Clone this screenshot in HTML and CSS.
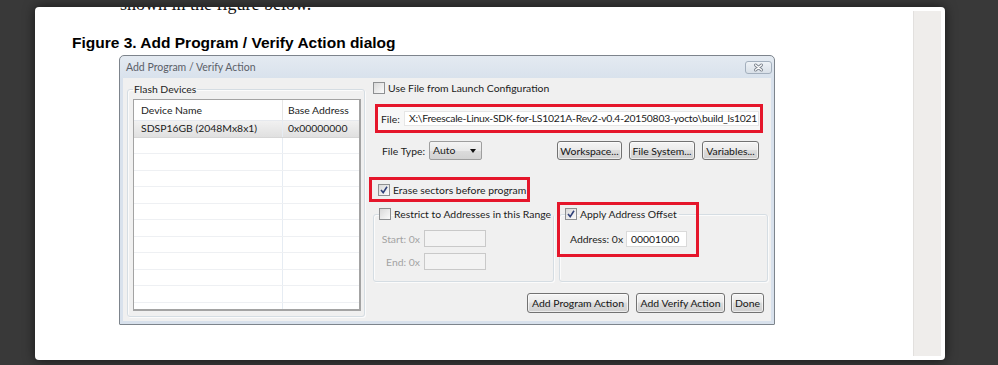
FILE: index.html
```html
<!DOCTYPE html>
<html lang="en">
<head>
  <meta charset="UTF-8">
  <title>Add Program / Verify Action dialog</title>
  <link rel="stylesheet" href="styles.css">
</head>
<body>
  <div class="page">
    <div class="doc">
      <p class="lead">shown in the figure below.</p>
      <h3 class="fig-title">Figure 3. Add Program / Verify Action dialog</h3>

      <!-- Captura del dialogo -->
      <div class="dialog">
        <div class="titlebar">
          <span>Add Program / Verify Action</span>
          <span class="close">
            <svg width="27" height="13" viewBox="0 0 27 13">
              <path d="M10.5 4 L16.5 9 M16.5 4 L10.5 9" stroke="#7a828c" stroke-width="3" stroke-linecap="round"/>
              <path d="M10.5 4 L16.5 9 M16.5 4 L10.5 9" stroke="#fdfdfd" stroke-width="1.3" stroke-linecap="round"/>
            </svg>
          </span>
        </div>

        <div class="dlg-body">
          <fieldset class="group devices">
            <legend>Flash Devices</legend>
            <div class="table">
              <div class="tr th"><div class="c1">Device Name</div><div class="c2">Base Address</div></div>
              <div class="tr sel"><div class="c1">SDSP16GB (2048Mx8x1)</div><div class="c2">0x00000000</div></div>
              <div class="tr"><div class="c1"></div><div class="c2"></div></div>
              <div class="tr"><div class="c1"></div><div class="c2"></div></div>
              <div class="tr"><div class="c1"></div><div class="c2"></div></div>
              <div class="tr"><div class="c1"></div><div class="c2"></div></div>
              <div class="tr"><div class="c1"></div><div class="c2"></div></div>
              <div class="tr"><div class="c1"></div><div class="c2"></div></div>
              <div class="tr"><div class="c1"></div><div class="c2"></div></div>
              <div class="tr"><div class="c1"></div><div class="c2"></div></div>
              <div class="tr"><div class="c1"></div><div class="c2"></div></div>
              <div class="tr"><div class="c1"></div><div class="c2"></div></div>
              <div class="tr"><div class="c1"></div><div class="c2"></div></div>
            </div>
          </fieldset>

          <div class="right">
            <div class="check-row"><span class="cb"></span>Use File from Launch Configuration</div>

            <div class="hl file-box">
              <span class="file-lbl">File:</span>
              <div class="input path">X:\Freescale-Linux-SDK-for-LS1021A-Rev2-v0.4-20150803-yocto\build_ls1021</div>
            </div>

            <div class="type-row">
              <span class="type-lbl">File Type:</span>
              <div class="combo">Auto<i class="arrow"></i></div>
              <div class="spacer"></div>
              <button class="btn w-ws">Workspace...</button>
              <button class="btn w-fs">File System...</button>
              <button class="btn w-var">Variables...</button>
            </div>

            <div class="hl erase">
              <span class="cb on"><svg width="10" height="10" viewBox="0 0 10 10"><path d="M2 5 L4.2 7.6 L8 1.8" fill="none" stroke="#31427a" stroke-width="1.6"/></svg></span>
              Erase sectors before program
            </div>

            <div class="groups">
              <fieldset class="group range">
                <legend><span class="cb"></span>Restrict to Addresses in this Range</legend>
                <div class="range-row"><span class="lbl">Start: 0x</span><div class="input off"></div></div>
                <div class="range-row"><span class="lbl">End: 0x</span><div class="input off"></div></div>
              </fieldset>
              <fieldset class="group offset">
                <legend><span class="cb on"><svg width="10" height="10" viewBox="0 0 10 10"><path d="M2 5 L4.2 7.6 L8 1.8" fill="none" stroke="#31427a" stroke-width="1.6"/></svg></span>Apply Address Offset</legend>
                <div class="addr-row"><span class="addr-lbl">Address: 0x</span><div class="input addr">00001000</div></div>
              </fieldset>
              <!-- Recuadro rojo encima -->
              <div class="mark"></div>
            </div>

            <div class="actions">
              <button class="btn w-prog">Add Program Action</button>
              <button class="btn w-ver">Add Verify Action</button>
              <button class="btn w-done">Done</button>
            </div>
          </div>
        </div>
      </div>
    </div>
    <div class="scrollbar"></div>
  </div>
</body>
</html>
```

FILE: styles.css
```css
/* Fondo y pagina */
body {
  margin: 0;
  height: 365px;
  overflow: hidden;
  background: #393939;
}

.page {
  margin: 7px 0 0 35px;
  width: 910px;
  height: 353px;
  background: #ffffff;
  border-radius: 4px;
  display: flex;
  overflow: hidden;
  box-shadow: 0 0 12px rgba(0, 0, 0, 0.6);
}

.doc {
  flex: 1;
  padding-left: 37px;
  overflow: hidden;
}

.scrollbar {
  width: 28px;
  margin: 4px 4px 4px 0;
  box-sizing: border-box;
  background: #efedeb;
  border-left: 1px solid #e2e0de;
}

.lead {
  margin: -12px 0 0 48px;
  font: 18px/18px "Liberation Serif", serif;
  color: #111;
  white-space: nowrap;
}

.fig-title {
  margin: 22px 0 0;
  font: bold 15.5px/16px "Liberation Sans", Arial, sans-serif;
  color: #000;
}

/* Dialogo */
.dialog {
  width: 656px;
  height: 270px;
  box-sizing: border-box;
  margin: 4px 0 0 47px;
  border: 1px solid #7d848c;
  border-radius: 5px 5px 1px 1px;
  background: linear-gradient(#e4eaf1, #d8e1ec 24px);
  display: flex;
  flex-direction: column;
  font-family: Lato, "Open Sans", sans-serif;
  font-size: 10.4px;
  color: #1b1b1b;
}

.titlebar {
  height: 22px;
  display: flex;
  align-items: center;
  justify-content: space-between;
  padding: 0 2px 0 6px;
  color: #5b6068;
  font-size: 10.5px;
}

.close {
  width: 27px;
  height: 13px;
  box-sizing: border-box;
  border: 1px solid #a3afbd;
  border-radius: 3px;
  background: linear-gradient(#eef2f6, #d9e0e8);
  display: flex;
}

.close svg {
  margin: -1px;
}

.dlg-body {
  flex: 1;
  margin: 0 3px 3px;
  padding: 0 3px 0 4px;
  background: #f0f0f0;
  display: flex;
}

/* Grupos */
.group {
  margin: 0;
  box-sizing: border-box;
  border: 1px solid #d5dde3;
  border-radius: 3px;
  box-shadow: inset 1px 1px 0 #fbfbfb, 1px 1px 0 #fbfbfb;
  min-width: 0;
}

.group legend {
  padding: 0 2px 0 0;
  line-height: 14px;
  display: flex;
  align-items: center;
  gap: 3px;
  white-space: nowrap;
}

.devices {
  width: 238px;
  margin: 4px 0;
  padding: 3px 3px 5px 5px;
}

.devices legend {
  padding: 0 1px;
  color: #222;
}

/* Tabla de dispositivos */
.table {
  height: 212px;
  box-sizing: border-box;
  border: 1px solid #a3a3a3;
  border-right-width: 2px;
  border-bottom-width: 2px;
  background: #fff;
  overflow: hidden;
}

.tr {
  display: flex;
  height: 16.5px;
  box-sizing: border-box;
  border-bottom: 1px solid #eef0f3;
  line-height: 15px;
  white-space: nowrap;
}

.tr.th {
  height: 21px;
  line-height: 20px;
  border-bottom-color: #e6e9ee;
}

.tr.sel {
  background: linear-gradient(#f1f1f1, #e0e0e0);
  border-bottom-color: #d6d6d6;
}

.c1 {
  width: 149px;
  flex: none;
  padding-left: 7px;
  box-sizing: border-box;
  border-right: 1px solid #e6ecf3;
}

.c2 {
  flex: 1;
  padding-left: 5px;
}

.th .c1, .th .c2 {
  border-right-color: #e6e6e6;
}

/* Columna derecha */
.right {
  width: 399px;
  margin-left: 4px;
  display: flex;
  flex-direction: column;
  white-space: nowrap;
}

.cb {
  width: 12px;
  height: 12px;
  box-sizing: border-box;
  flex: none;
  border: 1px solid #8e9092;
  background: linear-gradient(135deg, #d9d9d9, #fbfbfb);
  display: inline-flex;
  align-items: center;
  justify-content: center;
}

.check-row {
  height: 20px;
  padding-left: 4px;
  display: flex;
  align-items: center;
  gap: 3px;
}

.hl {
  box-sizing: border-box;
  border: 3px solid #e5162b;
}

.file-box {
  height: 29px;
  margin: 6px 5px 0 6px;
  padding: 0 1px 0 3px;
  background: #f7f7f7;
  display: flex;
  align-items: center;
}

.file-lbl {
  width: 23px;
  flex: none;
}

.input {
  height: 16px;
  box-sizing: border-box;
  border: 1px solid #dadada;
  background: #fff;
  padding-left: 4px;
  line-height: 14px;
  white-space: nowrap;
  overflow: hidden;
}

.path {
  flex: 1;
  height: 15px;
  line-height: 13px;
  border-color: #e6e6e6;
  letter-spacing: -0.25px;
}

.type-row {
  height: 19px;
  margin-top: 8px;
  padding: 0 9px 0 13px;
  display: flex;
  align-items: center;
  gap: 7px;
}

.type-lbl {
  width: 40px;
  flex: none;
}

.combo {
  width: 53px;
  height: 19px;
  box-sizing: border-box;
  border: 1px solid #9e9e9e;
  border-radius: 2px;
  background: linear-gradient(#f4f4f4, #e9e9e9 50%, #dcdcdc 50%, #d2d2d2);
  padding-left: 3px;
  line-height: 17px;
  display: flex;
  align-items: center;
  justify-content: space-between;
}

.arrow {
  margin-right: 5px;
  border-left: 3.5px solid transparent;
  border-right: 3.5px solid transparent;
  border-top: 4px solid #111;
}

.spacer {
  flex: 1;
}

.btn {
  height: 19px;
  box-sizing: border-box;
  padding: 0;
  border: 1px solid #727272;
  border-radius: 3px;
  background: linear-gradient(#f5f5f5, #ebebeb 45%, #dddddd 50%, #cfcfcf);
  box-shadow: inset 0 0 0 1px rgba(255, 255, 255, 0.6);
  font: inherit;
  color: #151515;
  white-space: nowrap;
}

.w-ws { width: 65px; }
.w-fs { width: 66px; }
.w-var { width: 57px; }

.erase {
  width: 161px;
  height: 25px;
  margin-top: 17px;
  padding-left: 6px;
  display: flex;
  align-items: center;
  gap: 3px;
}

/* Rango y desplazamiento */
.groups {
  position: relative;
  margin-top: 5px;
  padding-left: 4px;
  display: flex;
  gap: 5px;
}

.range, .offset {
  height: 75px;
  padding: 9px 0 0;
}

.range {
  width: 181px;
}

.offset {
  width: 209px;
  padding-top: 10px;
  padding-left: 10px;
}

.range legend {
  margin-left: 5px;
}

.offset legend {
  margin-left: -5px;
}

.range-row {
  display: flex;
  align-items: center;
  margin-bottom: 6px;
  color: #a3a3a3;
}

.range-row .lbl {
  width: 46px;
  margin-right: 4px;
  text-align: right;
}

.input.off {
  width: 62px;
  height: 17px;
  background: #f3f3f3;
  border-color: #c9c9c9;
}

.addr-row {
  display: flex;
  align-items: center;
}

.addr-lbl {
  width: 56px;
}

.input.addr {
  width: 61px;
  color: #111;
}

.mark {
  position: absolute;
  left: 188px;
  top: -5px;
  width: 142px;
  height: 55px;
  box-sizing: border-box;
  border: 3px solid #e5162b;
}

.actions {
  margin-top: 11px;
  padding-right: 4px;
  display: flex;
  justify-content: flex-end;
  gap: 6px;
}

.actions .btn {
  height: 20px;
}

.w-prog { width: 102px; margin-right: 1px; }
.w-ver { width: 89px; }
.w-done { width: 33px; }
```
